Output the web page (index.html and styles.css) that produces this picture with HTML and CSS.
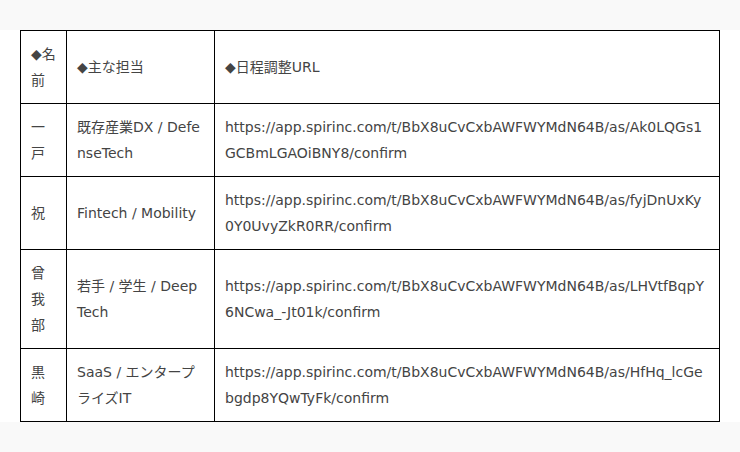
FILE: index.html
```html
<!DOCTYPE html>
<html lang="ja">
<head>
<meta charset="utf-8">
<link rel="stylesheet" href="styles.css">
</head>
<body>
<div class="band"></div>
<div class="main">
<table class="tbl">
<colgroup><col class="c1"><col class="c2"><col class="c3"></colgroup>
<tr><td class="name">◆名前</td><td>◆主な担当</td><td>◆日程調整URL</td></tr>
<tr><td class="name">一戸</td><td>既存産業DX / DefenseTech</td><td>https://app.spirinc.com/t/BbX8uCvCxbAWFWYMdN64B/as/Ak0LQGs1GCBmLGAOiBNY8/confirm</td></tr>
<tr><td class="name">祝</td><td>Fintech / Mobility</td><td>https://app.spirinc.com/t/BbX8uCvCxbAWFWYMdN64B/as/fyjDnUxKy0Y0UvyZkR0RR/confirm</td></tr>
<tr><td class="name">曾我部</td><td>若手 / 学生 / DeepTech</td><td>https://app.spirinc.com/t/BbX8uCvCxbAWFWYMdN64B/as/LHVtfBqpY6NCwa_-Jt01k/confirm</td></tr>
<tr><td class="name">黒崎</td><td>SaaS / エンタープライズIT</td><td>https://app.spirinc.com/t/BbX8uCvCxbAWFWYMdN64B/as/HfHq_lcGebgdp8YQwTyFk/confirm</td></tr>
</table>
</div>
<div class="band bottom"></div>
</body>
</html>
```
FILE: styles.css
```css
html, body { margin: 0; padding: 0; background: #f9f9f9; }
body { font-family: "DejaVu Sans", "Noto Sans CJK JP", sans-serif; font-size: 14px; color: #444; }
.band { height: 30px; background: #f9f9f9; }
.main { background: #fff; padding: 0 20px 0 20px; }
.tbl { border-collapse: collapse; width: 699px; table-layout: fixed; }
.c1 { width: 46px; }
.c2 { width: 148px; }
.c3 { width: 505px; }
.tbl td { border: 1px solid #000; padding: 10px 11px 10px 10px; line-height: 26px; vertical-align: middle; word-break: break-all; overflow-wrap: anywhere; }
.tbl td.name { padding-right: 8px; }
.bottom { height: 40px; }
```
